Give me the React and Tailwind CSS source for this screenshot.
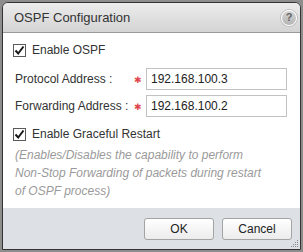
const Checkbox = () => (
  <div className="w-[13px] h-[13px] border border-[#5a5a5a] bg-white flex items-center justify-center shrink-0">
    <svg width="11" height="11" viewBox="0 0 11 11">
      <path d="M1.5 5.5 L4.2 8.5 L9.5 1.5" fill="none" stroke="#1a1a1a" strokeWidth="2" />
    </svg>
  </div>
);

const Field = ({ label, value }) => (
  <div className="flex items-center h-[22px]">
    <span className="w-[121px] pl-[2px] text-[12px] text-[#333]">{label}</span>
    <span className="w-[12px] text-[9px] text-[#e0474c] leading-none pt-[2px]">✱</span>
    <div className="w-[141px] h-[22px] border border-[#c2c2c2] bg-white flex items-center px-[4px] text-[12px] text-[#222]">
      {value}
    </div>
  </div>
);

const Button = ({ children }) => (
  <button className="w-[70px] h-[22px] rounded-[3px] border border-[#a3a3a3] bg-gradient-to-b from-white to-[#ececec] text-[12px] text-[#222]">
    {children}
  </button>
);

export default function App() {
  return (
    <div className="w-[303px] h-[252px] bg-[#8d8d8d] pt-[2px] pl-[2px] font-['Liberation_Sans',Arial,sans-serif]">
      <div className="relative w-[299px] h-[248px] border border-[#333] rounded-t-[6px] bg-white flex flex-col overflow-hidden">
        {/* Header */}
        <div className="h-[30px] shrink-0 border-b border-[#9a9a9a] bg-gradient-to-b from-[#ececec] to-[#d4d4d4] flex items-center justify-between pl-[11px] pr-[3px]">
          <span className="text-[13px] text-[#333]">OSPF Configuration</span>
          <div className="w-[16px] h-[16px] rounded-full border border-white bg-gradient-to-b from-[#d6d6d6] to-[#b4b4b4] shadow-[0_0_0_1px_#bdbdbd] flex items-center justify-center text-[11px] font-bold text-[#666] leading-none">
            ?
          </div>
        </div>

        {/* Body */}
        <div className="flex-1 pl-[10px]">
          <div className="flex items-center gap-[6px] h-[16px] mt-[9px]">
            <Checkbox />
            <span className="text-[12px] text-[#333]">Enable OSPF</span>
          </div>
          <div className="mt-[10px] flex flex-col gap-[5px]">
            <Field label="Protocol Address :" value="192.168.100.3" />
            <Field label="Forwarding Address :" value="192.168.100.2" />
          </div>
          <div className="flex items-center gap-[6px] h-[16px] mt-[9px]">
            <Checkbox />
            <span className="text-[12px] text-[#333]">Enable Graceful Restart</span>
          </div>
          <div className="mt-[4px] pl-[2px] text-[12px] italic text-[#9a9a9a] leading-[18px]">
            <div>(Enables/Disables the capability to perform</div>
            <div>Non-Stop Forwarding of packets during restart</div>
            <div>of OSPF process)</div>
          </div>
        </div>

        {/* Footer */}
        <div className="h-[41px] shrink-0 bg-[#dde1e6] flex justify-end items-start gap-[8px] pt-[10px] pr-[8px]">
          <Button>OK</Button>
          <Button>Cancel</Button>
        </div>

        {/* resize grip */}
        <svg className="absolute right-[1px] bottom-[1px]" width="9" height="9" viewBox="0 0 9 9">
          {[[7, 1], [5, 3], [7, 3], [3, 5], [5, 5], [7, 5], [1, 7], [3, 7], [5, 7], [7, 7]].map(([x, y], i) => (
            <rect key={i} x={x} y={y} width="1" height="1" fill="#8a8a8a" />
          ))}
        </svg>
      </div>
    </div>
  );
}
